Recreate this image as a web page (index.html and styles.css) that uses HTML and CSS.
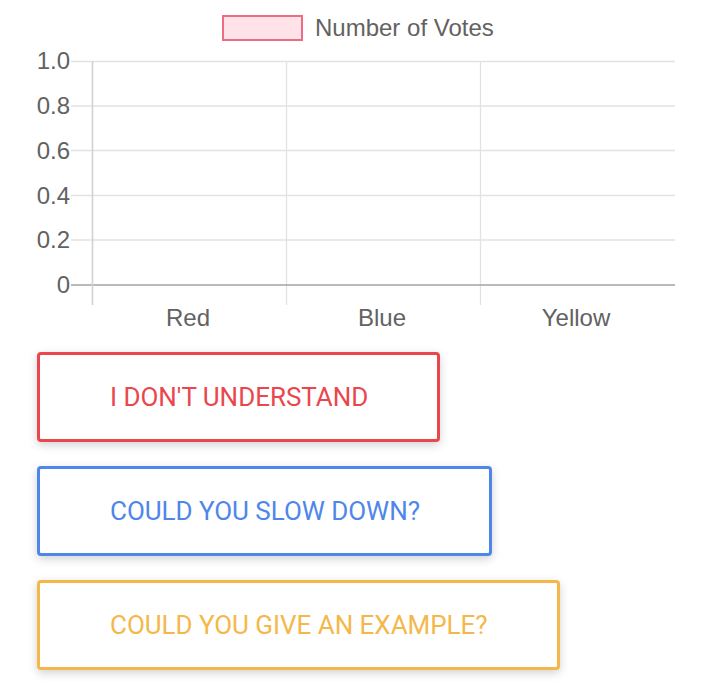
FILE: index.html
```html
<!DOCTYPE html>
<html>
<head>
<meta charset="utf-8">
<link rel="stylesheet" href="styles.css">
</head>
<body>
<div class="page">
  <svg class="chart" width="724" height="340" viewBox="0 0 724 340">
    <rect class="legend-box" x="223" y="16" width="79" height="24"/>
    <text class="legend-text" x="315" y="36">Number of Votes</text>
    <g class="grid">
      <line x1="71" y1="61.5" x2="675" y2="61.5"/>
      <line x1="71" y1="106" x2="675" y2="106"/>
      <line x1="71" y1="150.5" x2="675" y2="150.5"/>
      <line x1="71" y1="195.5" x2="675" y2="195.5"/>
      <line x1="71" y1="240" x2="675" y2="240"/>
      <line x1="92.5" y1="61" x2="92.5" y2="305"/>
      <line x1="286.5" y1="61" x2="286.5" y2="305"/>
      <line x1="480.5" y1="61" x2="480.5" y2="305"/>
    </g>
    <line class="zero" x1="71" y1="285" x2="675" y2="285"/>
    <line class="yaxis" x1="92.5" y1="61" x2="92.5" y2="305"/>
    <g class="ylabels">
      <text x="70" y="69">1.0</text>
      <text x="70" y="114">0.8</text>
      <text x="70" y="158.5">0.6</text>
      <text x="70" y="203.5">0.4</text>
      <text x="70" y="248">0.2</text>
      <text x="70" y="293">0</text>
    </g>
    <g class="xlabels">
      <text x="188" y="325.5">Red</text>
      <text x="382" y="325.5">Blue</text>
      <text x="576" y="325.5">Yellow</text>
    </g>
  </svg>
  <div class="actions">
    <button class="btn btn-red">I DON'T UNDERSTAND</button>
    <button class="btn btn-blue">COULD YOU SLOW DOWN?</button>
    <button class="btn btn-yellow">COULD YOU GIVE AN EXAMPLE?</button>
  </div>
</div>
</body>
</html>
```
FILE: styles.css
```css
html, body {
  margin: 0;
  padding: 0;
  background: #ffffff;
}

.page {
  width: 724px;
  height: 700px;
  overflow: hidden;
}

.chart {
  display: block;
  font-family: "Liberation Sans", Arial, sans-serif;
  font-size: 24px;
}

.chart text {
  fill: #626262;
}

.legend-box {
  fill: rgba(255, 99, 132, 0.18);
  stroke: #ee6b84;
  stroke-width: 2;
}

.grid line {
  stroke: #e2e2e2;
  stroke-width: 1.3;
}

.zero {
  stroke: #a3a3a3;
  stroke-width: 1.6;
}

.yaxis {
  stroke: #d2d2d2;
  stroke-width: 1.5;
}

.ylabels text {
  text-anchor: end;
}

.xlabels text {
  text-anchor: middle;
}

.actions {
  display: flex;
  flex-direction: column;
  align-items: flex-start;
  gap: 24px;
  padding: 12px 0 0 37px;
}

.btn {
  box-sizing: border-box;
  height: 90px;
  padding: 0 69px 0 70px;
  background: #ffffff;
  border: 3px solid;
  border-radius: 4px;
  box-shadow: 0 3px 10px rgba(0, 0, 0, 0.18);
  font-family: Roboto, "Liberation Sans", sans-serif;
  font-size: 26px;
  font-weight: 400;
  letter-spacing: -0.03px;
  text-transform: uppercase;
  cursor: pointer;
  white-space: nowrap;
}

.btn-red {
  border-color: #e9474d;
  color: #e9474d;
}

.btn-blue {
  border-color: #4e86ea;
  color: #4e86ea;
}

.btn-yellow {
  border-color: #f4b84a;
  color: #f4b84a;
}
```
